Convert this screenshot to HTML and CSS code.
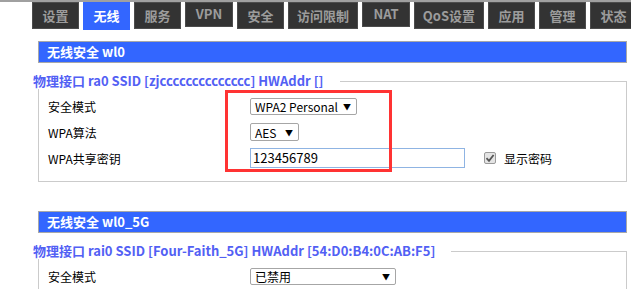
FILE: index.html
```html
<!DOCTYPE html>
<html lang="zh-CN">
<head>
<meta charset="utf-8">
<title>无线安全</title>
<link rel="stylesheet" href="styles.css">
</head>
<body>
<div class="page">
  <nav class="tabs">
    <div class="tab w2">设置</div>
    <div class="tab w2 active">无线</div>
    <div class="tab w2">服务</div>
    <div class="tab w3 latin">VPN</div>
    <div class="tab w2">安全</div>
    <div class="tab w4">访问限制</div>
    <div class="tab w3 latin">NAT</div>
    <div class="tab w4">QoS设置</div>
    <div class="tab w2">应用</div>
    <div class="tab w2">管理</div>
    <div class="tab w2">状态</div>
  </nav>

  <main class="content">
    <section class="section">
      <h2 class="bar">无线安全 wl0</h2>
      <fieldset class="group">
        <legend class="legend">物理接口 ra0 SSID [zjcccccccccccccc] HWAddr []</legend>
        <div class="row">
          <div class="label">安全模式</div>
          <div class="select s-mode"><span>WPA2 Personal</span><span class="arrow">▼</span></div>
        </div>
        <div class="row">
          <div class="label">WPA算法</div>
          <div class="select s-alg"><span>AES</span><span class="arrow">▼</span></div>
        </div>
        <div class="row">
          <div class="label">WPA共享密钥</div>
          <div class="input">123456789</div>
          <div class="check"><span class="box"><svg viewBox="0 0 12 12" width="12" height="12"><path d="M2.5 6.2 L5 8.8 L9.6 3" fill="none" stroke="#555" stroke-width="1.8"/></svg></span><span class="check-label">显示密码</span></div>
        </div>
      </fieldset>
    </section>

    <section class="section second">
      <h2 class="bar">无线安全 wl0_5G</h2>
      <fieldset class="group">
        <legend class="legend">物理接口 rai0 SSID [Four-Faith_5G] HWAddr [54:D0:B4:0C:AB:F5]</legend>
        <div class="row">
          <div class="label">安全模式</div>
          <div class="select s-off"><span>已禁用</span><span class="arrow">▼</span></div>
        </div>
      </fieldset>
    </section>
  </main>

  <div class="annot"></div>
</div>
</body>
</html>
```

FILE: styles.css
```css
* { box-sizing: border-box; }
html, body { margin: 0; padding: 0; background: #fff; }
body {
  font-family: "Noto Sans CJK SC", "Liberation Sans", sans-serif;
  font-size: 12px;
  color: #000;
  overflow: hidden;
}
.page {
  position: relative;
  width: 631px;
  height: 289px;
  border-top: 2px solid #a0a0a0;
}
.tabs {
  display: flex;
  align-items: flex-start;
  gap: 4px;
  padding-left: 32px;
  height: 28px;
}
.tab {
  height: 27px;
  background: #333;
  border: 1px solid #4c4c4c;
  color: #9c9c9c;
  font-weight: bold;
  font-size: 13px;
  line-height: 25px;
  text-align: center;
  flex: none;
}
.tab.w2 { width: 47px; }
.tab.w3 { width: 48px; }
.tab.w4 { width: 70px; }
.tab.latin { height: 25px; line-height: 21px; }
.tab.active {
  background: #3366ff;
  border-color: #3366ff;
  color: #fff;
  height: 28px;
}
.content {
  margin: 11px 0 0 38px;
  width: 589px;
}
.section.second { margin-top: 29px; }
.bar {
  margin: 0;
  height: 22px;
  background: #3366ff;
  border: 1px solid #a8a8a8;
  color: #fff;
  font-size: 13px;
  font-weight: bold;
  line-height: 19px;
  padding-left: 8px;
}
.group {
  margin: 10px 0 0 0;
  border: 1px solid #cbcbcb;
  padding: 4px 9px 10px 9px;
  min-width: 0;
}
.legend {
  margin-left: -15px;
  padding: 0 16px 0 0;
  background: #fff;
  color: #5260f4;
  font-size: 13px;
  font-weight: bold;
  line-height: 16px;
}
.row {
  display: flex;
  align-items: center;
  height: 26px;
}
.label {
  width: 202px;
  flex: none;
}
.select {
  display: flex;
  align-items: center;
  justify-content: space-between;
  gap: 5px;
  flex: none;
  white-space: nowrap;
  border: 1px solid #a6a6a6;
  border-radius: 2px;
  background: #fff;
  padding: 0 5px 0 4px;
  font-size: 12px;
  line-height: 15px;
}
.arrow { font-size: 8px; }
.s-mode { min-width: 103px; height: 17px; }
.s-alg { width: 49px; height: 18px; }
.s-off { width: 146px; height: 17px; }
.input {
  width: 215px;
  height: 20px;
  flex: none;
  border: 1px solid #8fb4e3;
  padding-left: 2px;
  font-size: 13px;
  line-height: 18px;
}
.check {
  display: flex;
  align-items: center;
  margin-left: 19px;
  gap: 8px;
}
.box {
  display: block;
  width: 12px;
  height: 12px;
  border: 1px solid #9a9a9a;
  border-radius: 2px;
  background: #e4e4e4;
  overflow: hidden;
}
.box svg { display: block; margin: -1px; }
.check-label { font-size: 12px; }
.annot {
  position: absolute;
  left: 225px;
  top: 88px;
  width: 167px;
  height: 82px;
  border: 3px solid #ff3333;
}
```
